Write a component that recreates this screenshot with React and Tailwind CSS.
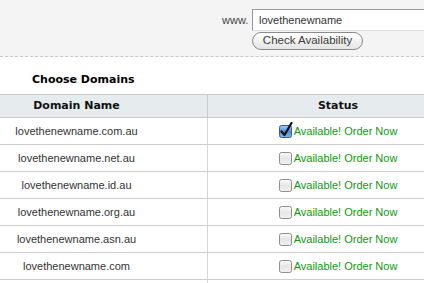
import React from 'react';

const domains = [
  { name: 'lovethenewname.com.au', checked: true },
  { name: 'lovethenewname.net.au', checked: false },
  { name: 'lovethenewname.id.au', checked: false },
  { name: 'lovethenewname.org.au', checked: false },
  { name: 'lovethenewname.asn.au', checked: false },
  { name: 'lovethenewname.com', checked: false },
];

const Box = ({ checked }) => (
  <svg width="14" height="16" viewBox="0 0 14 16" className="shrink-0 -mt-[3px]">
    <defs>
      <linearGradient id="blueg" x1="0" y1="0" x2="0" y2="1">
        <stop offset="0" stopColor="#a9cdf5" />
        <stop offset="0.5" stopColor="#4f8fe0" />
        <stop offset="1" stopColor="#7fb6f0" />
      </linearGradient>
      <linearGradient id="grayg" x1="0" y1="0" x2="0" y2="1">
        <stop offset="0" stopColor="#fbfbfb" />
        <stop offset="0.5" stopColor="#e6e6e6" />
        <stop offset="1" stopColor="#f2f2f2" />
      </linearGradient>
    </defs>
    {checked ? (
      <>
        <rect x="0.5" y="3.5" width="12" height="12" rx="2" fill="url(#blueg)" stroke="#3a5f8f" />
        <path d="M2.5 9.5 L5.5 13 L12.5 1" fill="none" stroke="#111" strokeWidth="2.2" strokeLinecap="round" strokeLinejoin="round" />
      </>
    ) : (
      <rect x="0.5" y="3.5" width="12" height="12" rx="2" fill="url(#grayg)" stroke="#8e8e8e" />
    )}
  </svg>
);

export default function App() {
  return (
    <div className="w-[424px] h-[283px] overflow-hidden bg-white font-['Liberation_Sans',Arial,sans-serif]">
      {/* search */}
      <div className="h-[57px] bg-[#f4f4f4] border-b border-dashed border-[#c9c9c9] pt-[9px]">
        <div className="flex items-center ml-[222px] w-[260px]">
          <span className="text-[11px] text-[#444] w-[30px]">www.</span>
          <div className="h-[22px] w-[230px] bg-white border-t border-l border-[#9a9a9a] border-b border-b-[#dedede] pl-[6px] flex items-center text-[11px] text-[#333]">
            lovethenewname
          </div>
        </div>
        <div className="ml-[252px] mt-[1px] h-[18px] w-[111px] rounded-full border border-[#8a8a8a] bg-gradient-to-b from-white to-[#e4e4e4] flex items-center justify-center text-[11.5px] text-[#3a3a3a]">
          Check Availability
        </div>
      </div>

      <div className="h-[37px] pt-[16px] pl-[32px] text-[11px] leading-[13px] font-bold text-black font-['DejaVu_Sans',Verdana,sans-serif]">
        Choose Domains
      </div>

      <div className="w-[468px]">
        <div className="grid grid-cols-[208px_260px] h-[24px] bg-[#e6ecee] border-y border-[#c9c9c9] text-[11px] font-bold text-[#111] font-['DejaVu_Sans',Verdana,sans-serif]">
          <div className="border-r border-[#c9c9c9] pr-[54px] flex items-center justify-center">Domain Name</div>
          <div className="flex items-center justify-center">Status</div>
        </div>
        {domains.map((d) => (
          <div key={d.name} className="grid grid-cols-[208px_260px] h-[27px] border-b border-[#cdcdcd] text-[11px]">
            <div className="border-r border-[#d6d6d6] pr-[54px] flex items-center justify-center text-[#333]">{d.name}</div>
            <div className="flex items-center justify-center">
              <Box checked={d.checked} />
              <span className="ml-[1px] text-[#0f990f]">Available! Order Now</span>
            </div>
          </div>
        ))}
        <div className="grid grid-cols-[208px_260px] h-[4px]">
          <div className="border-r border-[#d6d6d6]" />
          <div />
        </div>
      </div>
    </div>
  );
}
